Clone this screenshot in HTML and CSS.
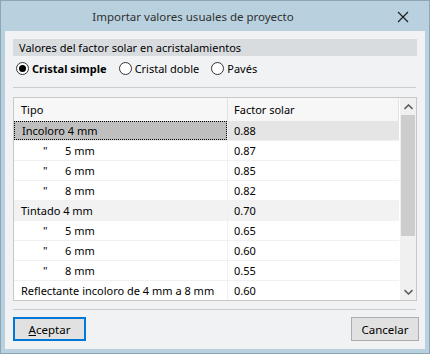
FILE: index.html
```html
<!DOCTYPE html>
<html lang="es">

<head>
  <meta charset="UTF-8" />
  <title>Importar valores usuales de proyecto</title>
  <link rel="stylesheet" href="styles.css">
</head>

<body>
  <div class="dialog">
    <div class="title-bar">
      <span class="title">Importar valores usuales de proyecto</span>
      <span class="close">
        <svg width="12" height="12" viewBox="0 0 12 12"><path d="M1 1L11 11M11 1L1 11" stroke="#1a1a1a" stroke-width="1.1" fill="none" /></svg>
      </span>
    </div>
    <div class="client">
      <div class="group-title">Valores del factor solar en acristalamientos</div>
      <div class="radios">
        <label class="radio checked"><span class="circle"></span>Cristal simple</label>
        <label class="radio"><span class="circle"></span>Cristal doble</label>
        <label class="radio"><span class="circle"></span>Pavés</label>
      </div>
      <div class="sep"></div>
      <div class="table">
        <div class="rows">
          <div class="row head"><div class="c1">Tipo</div><div class="c2">Factor solar</div></div>
          <div class="row alt selected"><div class="c1"><span class="focus">Incoloro 4 mm</span></div><div class="c2">0.88</div></div>
          <div class="row"><div class="c1 sub"><span class="ditto">"</span>5 mm</div><div class="c2">0.87</div></div>
          <div class="row"><div class="c1 sub"><span class="ditto">"</span>6 mm</div><div class="c2">0.85</div></div>
          <div class="row"><div class="c1 sub"><span class="ditto">"</span>8 mm</div><div class="c2">0.82</div></div>
          <div class="row alt"><div class="c1">Tintado 4 mm</div><div class="c2">0.70</div></div>
          <div class="row"><div class="c1 sub"><span class="ditto">"</span>5 mm</div><div class="c2">0.65</div></div>
          <div class="row"><div class="c1 sub"><span class="ditto">"</span>6 mm</div><div class="c2">0.60</div></div>
          <div class="row"><div class="c1 sub"><span class="ditto">"</span>8 mm</div><div class="c2">0.55</div></div>
          <div class="row"><div class="c1">Reflectante incoloro de 4 mm a 8 mm</div><div class="c2">0.60</div></div>
        </div>
        <div class="scrollbar">
          <div class="arrow">
            <svg width="9" height="6" viewBox="0 0 9 6"><path d="M0.5 5L4.5 1L8.5 5" stroke="#606060" stroke-width="1.6" fill="none" /></svg>
          </div>
          <div class="thumb"></div>
          <div class="track"></div>
          <div class="arrow">
            <svg width="9" height="6" viewBox="0 0 9 6"><path d="M0.5 1L4.5 5L8.5 1" stroke="#606060" stroke-width="1.6" fill="none" /></svg>
          </div>
        </div>
      </div>
      <div class="sep low"></div>
      <div class="buttons">
        <button class="btn default"><u>A</u>ceptar</button>
        <button class="btn">Cancelar</button>
      </div>
    </div>
  </div>
</body>

</html>
```

FILE: styles.css
```css
* {
  box-sizing: border-box;
}

html,
body {
  margin: 0;
  padding: 0;
  font-family: 'Noto Sans', 'Open Sans', sans-serif;
  font-size: 11px;
  color: #000;
}

.dialog {
  width: 430px;
  height: 354px;
  background: #b9d1de;
  border: 1px solid #8ca6b8;
  display: flex;
  flex-direction: column;
  padding: 0 4px 4px 4px;
}

.title-bar {
  height: 30px;
  display: flex;
  align-items: center;
  justify-content: center;
  position: relative;
  font-size: 11.5px;
}

.title {
  color: #303030;
  padding-right: 44px;
}

.close {
  position: absolute;
  right: 16px;
  top: 10px;
  display: flex;
}

.client {
  flex: 1;
  background: #f1f2f4;
  padding: 8px 8px 8px 8px;
  display: flex;
  flex-direction: column;
}

.group-title {
  height: 17px;
  background: #d9dcdf;
  padding-left: 6px;
  line-height: 17px;
  width: 404px;
}

.radios {
  display: flex;
  height: 24px;
  align-items: center;
  padding-left: 3px;
}

.radio {
  display: flex;
  align-items: center;
  gap: 3px;
  margin-right: 12px;
}

.radio.checked {
  font-weight: bold;
}

.circle {
  width: 13px;
  height: 13px;
  border: 1px solid #333;
  border-radius: 50%;
  background: #fff;
  display: flex;
  align-items: center;
  justify-content: center;
}

.radio.checked .circle::after {
  content: "";
  width: 7px;
  height: 7px;
  border-radius: 50%;
  background: #000;
}

.sep {
  height: 1px;
  background: #c9cdd1;
  margin: 7px 0 9px 0;
  width: 403px;
}

.sep.low {
  margin: 8px 0 7px 0;
}

.table {
  height: 204px;
  width: 404px;
  border: 1px solid #c8c8c8;
  background: #fff;
  display: flex;
  overflow: hidden;
}

.rows {
  flex: 1;
  overflow: hidden;
}

.row {
  display: flex;
  height: 20px;
  border-bottom: 1px solid #f0f0f0;
}

.row.head {
  height: 23px;
  background: #f7f7f7;
  border-bottom: none;
}

.row.alt {
  background: #f2f2f2;
}

.row.selected {
  background: #e5e5e5;
}

.c1 {
  width: 214px;
  padding-left: 7px;
  display: flex;
  align-items: center;
  white-space: nowrap;
  overflow: hidden;
  border-right: 1px solid #f0f0f0;
}

.head .c1,
.head .c2 {
  border-right: 1px solid #e2e2e2;
}

.c2 {
  flex: 1;
  padding-left: 6px;
  display: flex;
  align-items: center;
}

.selected .c1 {
  padding-left: 0;
}

.focus {
  display: flex;
  align-items: center;
  width: 100%;
  height: 100%;
  padding-left: 7px;
  background: #bfbfbf;
  border: 1px dotted #000;
}

.sub {
  padding-left: 29px;
}

.ditto {
  width: 22px;
}

.scrollbar {
  width: 17px;
  background: #f0f0f0;
  display: flex;
  flex-direction: column;
  border-left: 1px solid #fff;
}

.arrow {
  height: 17px;
  display: flex;
  align-items: center;
  justify-content: center;
}

.thumb {
  height: 121px;
  background: #cdcdcd;
  margin: 0 1px;
}

.track {
  flex: 1;
}

.buttons {
  display: flex;
  justify-content: space-between;
  padding-right: 0;
  width: 406px;
}

.btn {
  font-family: inherit;
  font-size: 11.5px;
  height: 24px;
  background: #e1e1e1;
  border: 1px solid #adadad;
  padding: 0;
  width: 68px;
  color: #000;
}

.btn.default {
  width: 73px;
  border: 2px solid #0078d7;
}

.btn u {
  text-decoration-thickness: 1px;
}
```
